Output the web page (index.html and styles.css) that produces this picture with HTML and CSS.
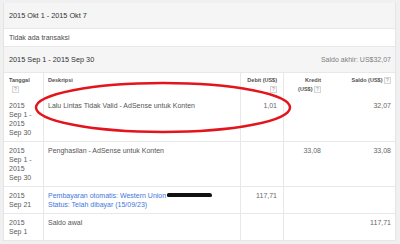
FILE: index.html
```html
<!DOCTYPE html>
<html lang="id">
<head>
<meta charset="utf-8">
<title>Transaksi</title>
<link rel="stylesheet" href="styles.css">
</head>
<body>
<div class="panel">
  <div class="period"><span>2015 Okt 1 - 2015 Okt 7</span></div>
  <div class="empty">Tidak ada transaksi</div>
  <div class="period"><span>2015 Sep 1 - 2015 Sep 30</span><span class="ending">Saldo akhir: US$32,07</span></div>
  <div class="row head">
    <div class="c date">Tanggal<br><span class="help first">?</span></div>
    <div class="c desc">Deskripsi</div>
    <div class="c debit">Debit (US$)<br><span class="help">?</span></div>
    <div class="c kredit">Kredit<br>(US$) <span class="help">?</span></div>
    <div class="c saldo">Saldo (US$) <span class="help">?</span></div>
  </div>
  <div class="row">
    <div class="c date">2015<br>Sep 1 -<br>2015<br>Sep 30</div>
    <div class="c desc">Lalu Lintas Tidak Valid - AdSense untuk Konten</div>
    <div class="c debit">1,01</div>
    <div class="c kredit"></div>
    <div class="c saldo">32,07</div>
  </div>
  <div class="row">
    <div class="c date">2015<br>Sep 1 -<br>2015<br>Sep 30</div>
    <div class="c desc">Penghasilan - AdSense untuk Konten</div>
    <div class="c debit"></div>
    <div class="c kredit">33,08</div>
    <div class="c saldo">33,08</div>
  </div>
  <div class="row">
    <div class="c date">2015<br>Sep 21</div>
    <div class="c desc link">Pembayaran otomatis: Western Union<span class="redact"></span><br>Status: Telah dibayar (15/09/23)</div>
    <div class="c debit">117,71</div>
    <div class="c kredit"></div>
    <div class="c saldo"></div>
  </div>
  <div class="row">
    <div class="c date">2015<br>Sep 1</div>
    <div class="c desc">Saldo awal</div>
    <div class="c debit"></div>
    <div class="c kredit"></div>
    <div class="c saldo">117,71</div>
  </div>
</div>
<svg class="mark" width="400" height="244" viewBox="0 0 400 244" aria-hidden="true">
  <ellipse cx="163" cy="107.5" rx="127" ry="24.5" fill="none" stroke="#e3141c" stroke-width="2.5"/>
</svg>
</body>
</html>
```

FILE: styles.css
```css
* { box-sizing: border-box; }

body {
  margin: 0;
  height: 244px;
  overflow: hidden;
  position: relative;
  background: #f0f0f0;
  font-family: "Liberation Sans", Arial, sans-serif;
}

.panel {
  margin: 3px 4px 0 3px;
  background: #fff;
  border-left: 1px solid #e4e4e4;
  border-right: 1px solid #e4e4e4;
}

.period {
  height: 26px;
  display: flex;
  align-items: center;
  justify-content: space-between;
  padding: 0 4px 0 5px;
  background: #f5f5f5;
  border-bottom: 1px solid #e8e8e8;
  font-size: 7.3px;
  color: #333;
}

.ending {
  font-size: 7px;
  color: #808080;
}

.empty {
  height: 18px;
  line-height: 17px;
  padding-left: 5px;
  border-bottom: 1px solid #e8e8e8;
  font-size: 7px;
  color: #4a4a4a;
}

.row {
  display: grid;
  grid-template-columns: 40px 197px 43px 43px 1fr;
  border-bottom: 1px solid #e8e8e8;
  font-size: 7px;
  line-height: 9px;
  color: #5a5a5a;
}

.row.head {
  border-bottom: 0;
}

.c {
  padding: 4px 0;
}

.head .c {
  padding: 3px 0;
  font-size: 5.5px;
  font-weight: bold;
  color: #505050;
}

.date {
  padding-left: 5px !important;
  border-right: 1px solid #e8e8e8;
}

.desc {
  padding-left: 4px !important;
  border-right: 1px solid #e8e8e8;
  color: #555;
}

.debit {
  text-align: right;
  padding-right: 6px !important;
  border-right: 1px solid #e8e8e8;
  color: #666;
}

.kredit {
  text-align: right;
  padding-right: 6px !important;
  color: #6a6a6a;
}

.saldo {
  text-align: right;
  padding-right: 4px !important;
  color: #666;
}

.link {
  color: #4277db;
}

.help {
  display: inline-block;
  width: 7px;
  height: 7px;
  border: 1px solid #d6d6d6;
  background: #fafafa;
  font-size: 5px;
  line-height: 5px;
  font-weight: normal;
  text-align: center;
  color: #999;
  vertical-align: middle;
}

.help.first {
  margin-left: 3px;
}

.redact {
  display: inline-block;
  width: 45px;
  height: 4px;
  margin-left: 1px;
  background: #111;
  border-radius: 2px 3px 2px 2px;
  vertical-align: 1px;
}

.mark {
  position: absolute;
  left: 0;
  top: 0;
  pointer-events: none;
}
```
